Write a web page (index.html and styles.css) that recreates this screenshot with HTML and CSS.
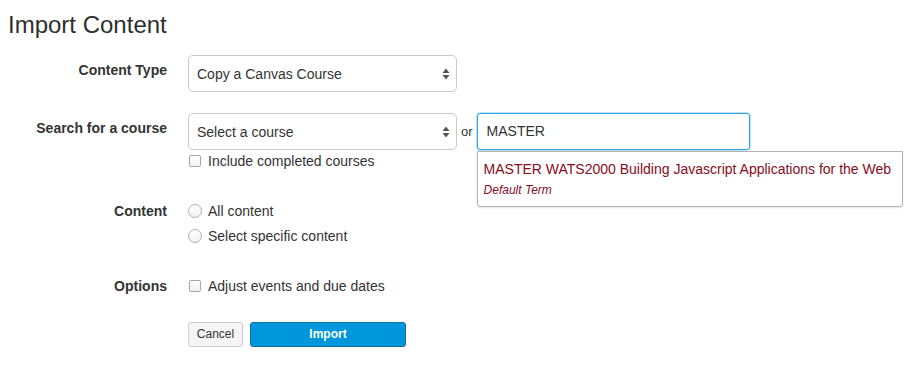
FILE: index.html
```html
<!DOCTYPE html>
<html>
<head>
<meta charset="utf-8">
<link rel="stylesheet" href="styles.css">
</head>
<body>
<div class="page">
  <h1 class="title">Import Content</h1>
  <div class="form">
    <div class="row row-type">
      <div class="label">Content Type</div>
      <div class="control">
        <div class="select select-wide">
          <span>Copy a Canvas Course</span>
          <svg class="arrows" width="8" height="12" viewBox="0 0 8 12"><path d="M4 0.5 L7.5 5 L0.5 5 Z M4 11.5 L7.5 7 L0.5 7 Z" fill="#555"/></svg>
        </div>
      </div>
    </div>
    <div class="row row-search">
      <div class="label">Search for a course</div>
      <div class="control">
        <div class="search-line">
          <div class="select select-wide">
            <span>Select a course</span>
            <svg class="arrows" width="8" height="12" viewBox="0 0 8 12"><path d="M4 0.5 L7.5 5 L0.5 5 Z M4 11.5 L7.5 7 L0.5 7 Z" fill="#555"/></svg>
          </div>
          <span class="or">or</span>
          <div class="search-wrap">
            <div class="input">MASTER</div>
            <div class="menu">
              <div class="menu-title">MASTER WATS2000 Building Javascript Applications for the Web</div>
              <div class="menu-term">Default Term</div>
            </div>
          </div>
        </div>
        <div class="check-line"><span class="checkbox"></span><span>Include completed courses</span></div>
      </div>
    </div>
    <div class="row row-content">
      <div class="label">Content</div>
      <div class="control radios">
        <div class="check-line"><span class="radio"></span><span>All content</span></div>
        <div class="check-line"><span class="radio"></span><span>Select specific content</span></div>
      </div>
    </div>
    <div class="row row-options">
      <div class="label">Options</div>
      <div class="control">
        <div class="check-line"><span class="checkbox"></span><span>Adjust events and due dates</span></div>
      </div>
    </div>
    <div class="row row-buttons">
      <div class="label"></div>
      <div class="control buttons">
        <div class="btn btn-cancel">Cancel</div>
        <div class="btn btn-import">Import</div>
      </div>
    </div>
  </div>
</div>
</body>
</html>
```
FILE: styles.css
```css
* { box-sizing: border-box; }
html, body { margin: 0; padding: 0; background: #fff; }
body {
  font-family: "Liberation Sans", Arial, Helvetica, sans-serif;
  color: #333;
  font-size: 14px;
  width: 922px;
  height: 374px;
  overflow: hidden;
}
.page { padding: 10px 8px 0 8px; }
.title {
  margin: 0;
  font-size: 24px;
  line-height: 29px;
  font-weight: normal;
  color: #2f2f2f;
}
.form { margin-top: 16px; }
.row { display: flex; align-items: flex-start; }
.label {
  width: 159px;
  flex: none;
  text-align: right;
  font-weight: bold;
  line-height: 20px;
  padding-top: 5px;
  margin-right: 21px;
}
.control { flex: none; }
.row-search { margin-top: 21px; }
.row-content { margin-top: 30px; }
.row-content .label { padding-top: 0; }
.row-options { margin-top: 30px; }
.row-options .label { padding-top: 0; }
.row-buttons { margin-top: 26px; }
.row-buttons .label { padding-top: 0; }

.select {
  height: 37px;
  border: 1px solid #c9c9c9;
  border-radius: 5px;
  background: #fff;
  display: flex;
  align-items: center;
  justify-content: space-between;
  padding: 0 6px 0 8px;
  color: #333;
}
.select-wide { width: 269px; }
.arrows { display: block; }

.search-line { display: flex; align-items: flex-start; }
.or { line-height: 37px; margin: 0 4px 0 4px; font-size: 13px; }
.search-wrap { position: relative; }
.input {
  width: 273px;
  height: 37px;
  border: 1px solid #2ea7e6;
  border-radius: 3px;
  padding: 0 9px;
  line-height: 35px;
  color: #333;
  box-shadow: 0 0 0 0.5px #7cc6ee;
}
.menu {
  position: absolute;
  top: 38px;
  left: 0;
  width: 426px;
  border: 1px solid #b3b3b3;
  border-radius: 0 0 3px 3px;
  background: #fff;
  padding: 8px 6px 8px 6px;
  color: #870b1d;
  box-shadow: 0 1px 2px rgba(0,0,0,0.1);
}
.menu-title { line-height: 18px; white-space: nowrap; }
.menu-term { font-style: italic; font-size: 12px; line-height: 16px; margin-top: 4px; }

.check-line {
  display: flex;
  align-items: center;
  line-height: 20px;
  height: 20px;
}
.row-search .check-line { margin-top: 1px; }
.radios .check-line + .check-line { margin-top: 5px; }
.checkbox {
  width: 12px;
  height: 12px;
  border: 1px solid #a6a6a6;
  border-radius: 2px;
  background: linear-gradient(#fff, #f1f1f1);
  margin: 0 7px 0 1px;
  flex: none;
}
.radio {
  width: 14px;
  height: 14px;
  border: 1px solid #b0b0b0;
  border-radius: 50%;
  background: linear-gradient(#fff, #f1f1f1);
  margin: 0 6px 0 0;
  flex: none;
}

.buttons { display: flex; gap: 7px; }
.btn {
  height: 25px;
  line-height: 23px;
  font-size: 12px;
  text-align: center;
  border-radius: 3px;
}
.btn-cancel {
  width: 55px;
  background: #f5f5f5;
  border: 1px solid #cfcfcf;
  color: #333;
}
.btn-import {
  width: 156px;
  background: #0096db;
  border: 1px solid #0a6fa5;
  color: #fff;
  font-weight: bold;
}
```
